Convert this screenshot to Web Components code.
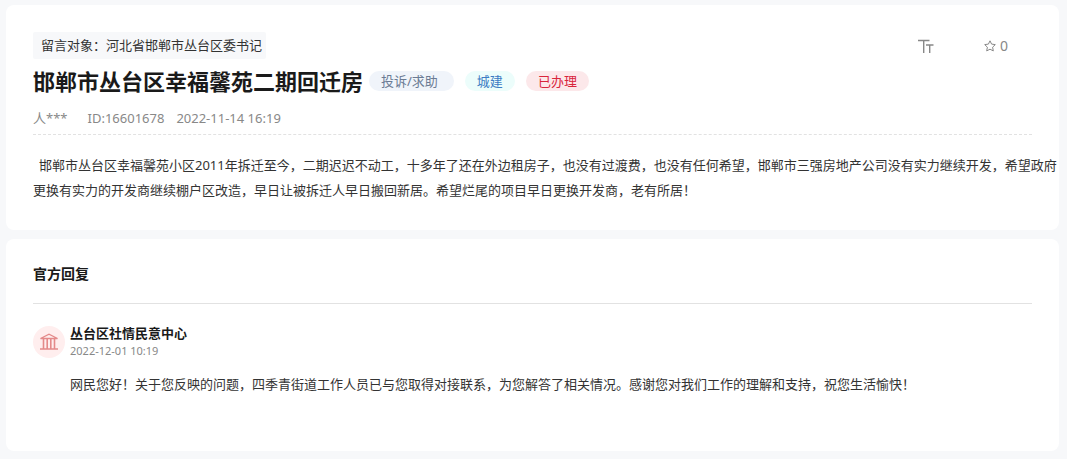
<!DOCTYPE html>
<html lang="zh-CN">
<head>
<meta charset="utf-8">
<meta name="viewport" content="width=device-width, initial-scale=1">
<title>邯郸市丛台区幸福馨苑二期回迁房</title>
<style>
  body {
    margin: 0;
    background: #f7f8fa;
    color: #333;
    font: 13px/25px "Noto Sans", "Noto Sans CJK SC", sans-serif;
  }
</style>
</head>
<body>
<message-page>
  <surface-card>
    <message-header author="人***" message-id="16601678" time="2022-11-14 16:19">
      <span slot="target">留言对象：河北省邯郸市丛台区委书记</span>
      <message-actions slot="actions" count="0"></message-actions>
      <span slot="title">邯郸市丛台区幸福馨苑二期回迁房</span>
      <tag-pill slot="tags" tone="type">投诉/求助</tag-pill>
      <tag-pill slot="tags" tone="field">城建</tag-pill>
      <tag-pill slot="tags" tone="status">已办理</tag-pill>
    </message-header>
    <message-text>邯郸市丛台区幸福馨苑小区2011年拆迁至今，二期迟迟不动工，十多年了还在外边租房子，也没有过渡费，也没有任何希望，邯郸市三强房地产公司没有实力继续开发，希望政府更换有实力的开发商继续棚户区改造，早日让被拆迁人早日搬回新居。希望烂尾的项目早日更换开发商，老有所居！</message-text>
  </surface-card>
  <surface-card>
    <section-heading>官方回复</section-heading>
    <official-reply time="2022-12-01 10:19">
      <span slot="name">丛台区社情民意中心</span>
      网民您好！关于您反映的问题，四季青街道工作人员已与您取得对接联系，为您解答了相关情况。感谢您对我们工作的理解和支持，祝您生活愉快！
    </official-reply>
  </surface-card>
</message-page>

<script>
  const define = (name, markup, fill) => customElements.define(name, class extends HTMLElement {
    constructor() {
      super();
      const template = document.createElement('template');
      template.innerHTML = markup;
      this.attachShadow({ mode: 'open' }).append(template.content.cloneNode(true));
    }
    connectedCallback() {
      if (fill) fill(this, selector => this.shadowRoot.querySelector(selector));
    }
  });

  define('message-page', `
    <style>
      :host { display: block; }
      main { display: flex; flex-direction: column; gap: 9px; padding: 5px 8px 8px 6px; }
    </style>
    <main><slot></slot></main>`);

  define('surface-card', `
    <style>
      :host { display: block; background: #fff; border-radius: 8px; padding: 27px; }
    </style>
    <slot></slot>`);

  define('tag-pill', `
    <style>
      :host {
        display: inline-block; padding: 0 12px; border-radius: 10px;
        font-size: 13px; line-height: 20px; white-space: nowrap;
        background: #f0f4fa; color: #6b7b94;
      }
      :host([tone="type"]) { padding-right: 16px; }
      :host([tone="field"]) { background: #ecfdfb; color: #3d7dc4; }
      :host([tone="status"]) { background: #fce8ea; color: #d9253c; }
    </style>
    <slot></slot>`);

  define('message-actions', `
    <style>
      :host { display: flex; align-items: center; gap: 50px; padding-right: 24px; }
      button {
        display: flex; align-items: center; gap: 4px; padding: 0; border: 0;
        background: none; color: #888; font: inherit; font-size: 14px; line-height: 20px; cursor: pointer;
      }
      svg { display: block; fill: none; stroke: currentColor; }
    </style>
    <button type="button" aria-label="字号">
      <svg width="16" height="14" viewBox="0 0 16 14" stroke-width="1.4">
        <path d="M0 1.500h11.500M5.700 1.500V14M8 6h7.500M11.700 6V14"/>
      </svg>
    </button>
    <button type="button" aria-label="收藏">
      <svg width="12" height="12" viewBox="0 0 12 12" stroke-linejoin="round">
        <path d="M6 .8l1.600 3.300 3.700.5-2.700 2.600.7 3.700L6 9.200l-3.300 1.700.7-3.700L.7 4.600l3.700-.5z"/>
      </svg>
      <span id="count"></span>
    </button>`,
    (host, $) => { $('#count').textContent = host.getAttribute('count'); });

  define('message-header', `
    <style>
      :host { display: block; border-bottom: 1px dashed #e2e2e2; }
      .top, .heading, .tags, .meta { display: flex; align-items: center; }
      .top { justify-content: space-between; }
      .target { padding: 0 4px 0 8px; background: #f7f8fa; border-radius: 2px; line-height: 27px; }
      .heading { flex-wrap: wrap; column-gap: 6px; min-height: 44px; }
      .tags { gap: 11px; }
      h1 { margin: 0; color: #1a1a1a; font-size: 22px; line-height: 32px; font-weight: 700; }
      .meta { color: #888; line-height: 31px; }
      .author { margin-right: 20px; }
      .id { margin-right: 12px; }
    </style>
    <div class="top">
      <div class="target"><slot name="target"></slot></div>
      <slot name="actions"></slot>
    </div>
    <div class="heading">
      <h1><slot name="title"></slot></h1>
      <div class="tags"><slot name="tags"></slot></div>
    </div>
    <div class="meta">
      <span class="author"></span><span class="id"></span><time></time>
    </div>`,
    (host, $) => {
      $('.author').textContent = host.getAttribute('author');
      $('.id').textContent = 'ID:' + host.getAttribute('message-id');
      $('time').textContent = host.getAttribute('time');
    });

  define('message-text', `
    <style>
      :host { display: block; margin: 18px -26px 0 0; }
      p { margin: 0; text-indent: 6px; }
    </style>
    <p><slot></slot></p>`);

  define('section-heading', `
    <style>
      :host { display: block; padding-bottom: 21px; border-bottom: 1px solid #e2e2e2; }
      h2 { margin: 0; color: #1a1a1a; font-size: 14px; line-height: 16px; font-weight: 700; }
    </style>
    <h2><slot></slot></h2>`);

  define('official-reply', `
    <style>
      :host { display: block; }
      article { display: flex; align-items: flex-start; gap: 5px; padding: 20px 0 27px; }
      .avatar {
        display: grid; place-items: center; flex: none; width: 32px; height: 32px;
        margin-top: 2px; border-radius: 50%; background: #ffeeee;
      }
      svg { display: block; fill: none; stroke: #e48a8a; }
      .content { flex: 1; min-width: 0; }
      h3 { margin: 0; color: #1a1a1a; font-size: 13px; line-height: 18px; font-weight: 700; }
      time { display: block; color: #888; font-size: 11px; line-height: 18px; }
      p { margin: 12px 0 0; }
    </style>
    <article>
      <div class="avatar">
        <svg width="20" height="18" viewBox="0 0 20 18" stroke-width="1.300">
          <path d="M1.500 5.500L10 1.200l8.500 4.300zM1 16h18"/>
          <path d="M4.500 6v10M8.200 6v10M11.800 6v10M15.500 6v10" stroke-width="1.600"/>
        </svg>
      </div>
      <div class="content">
        <h3><slot name="name"></slot></h3>
        <time></time>
        <p><slot></slot></p>
      </div>
    </article>`,
    (host, $) => { $('time').textContent = host.getAttribute('time'); });
</script>
</body>
</html>
